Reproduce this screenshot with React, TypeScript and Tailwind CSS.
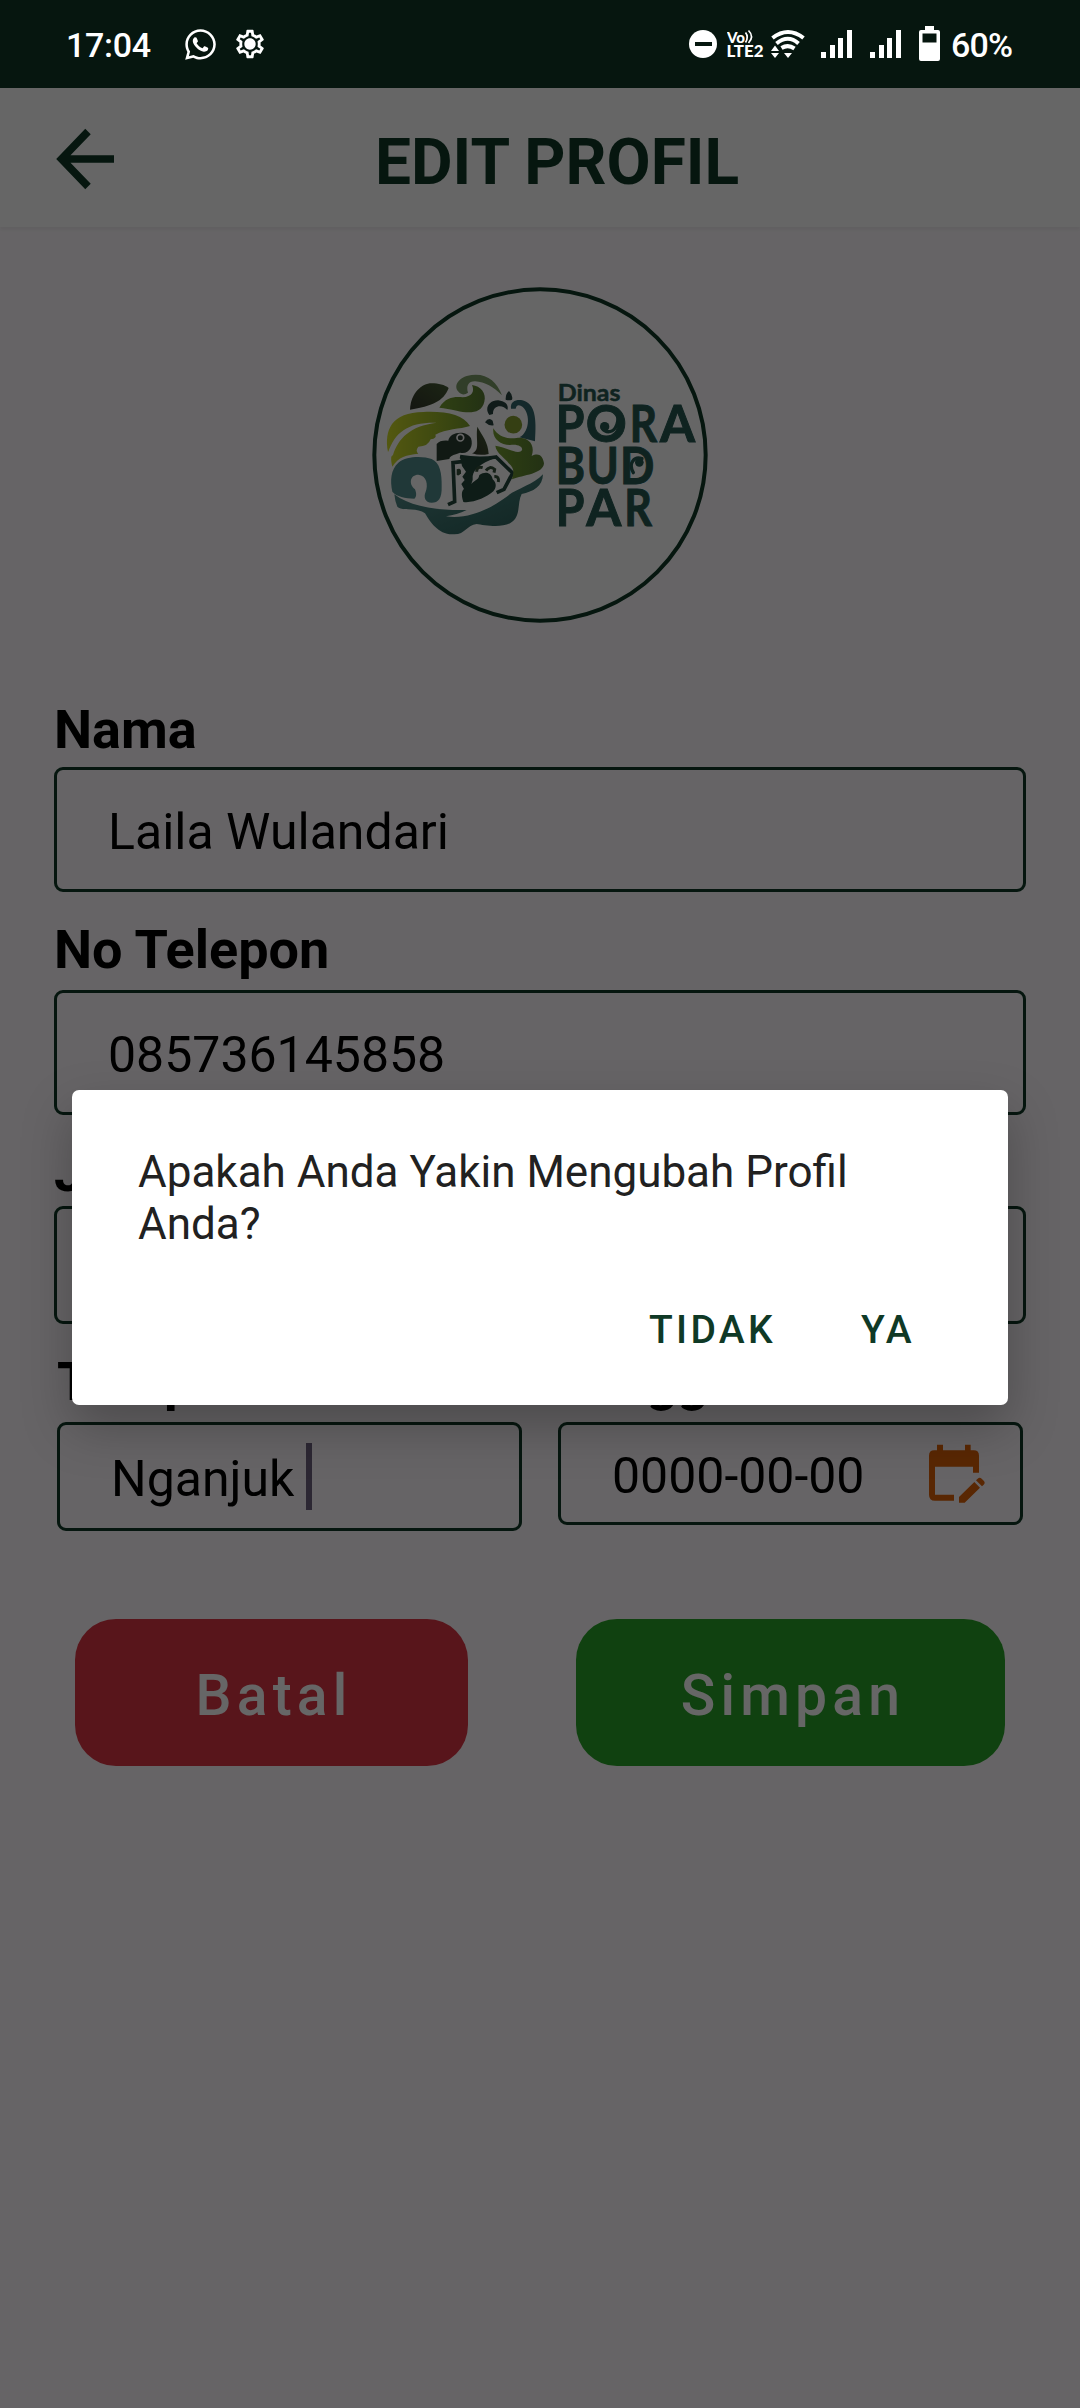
import React from "react";
import { FaWhatsapp } from "react-icons/fa";
import { MdOutlineSettings } from "react-icons/md";

function SignalIcon({ className }: { className: string }) {
  return (
    <svg className={className} width="31" height="28" viewBox="0 0 31 28" fill="white">
      <path d="M0 22h5v6H0zM9 15h5v13H9zM17 8h5v20h-5zM26 0h5v28h-5z" />
    </svg>
  );
}

function EditCalendarIcon() {
  return (
    <svg width="57" height="61" viewBox="42 40 171 183" fill="#de6108">
      <path
        fillRule="evenodd"
        d="M66 45h18v17h66V45h17v17h9q16 0 16 16v51h-18v-18H60v84h57v18H60q-18 0-18-18V78q0-16 16-16h8z"
      />
      <path d="M132 219v-17l46-45 17 17-46 45zM183 152l5-5q6-6 12 0l6 6q6 6 0 12l-5 5z" />
    </svg>
  );
}

function StatusBar() {
  return (
    <div className="relative z-20 flex h-[88px] items-start text-white">
      <span className="ml-[66px] mt-[25px] w-[90px] text-[34px] font-medium leading-10 tracking-[-0.3px]">17:04</span>
      <FaWhatsapp className="ml-[27px] mt-[27px] size-[35px]" />
      <div className="relative ml-[15px] mt-[27px] size-[34px]">
        <MdOutlineSettings className="size-[34px]" />
        <div className="absolute left-[12px] top-[12px] size-[10px] rounded-full bg-white" />
      </div>
      <div className="ml-[422px] mt-[30px] flex size-[28px] items-center justify-center rounded-full bg-white">
        <div className="h-[4px] w-[17px] bg-[#06170f]" />
      </div>
      <svg className="ml-[10px] mt-[27px]" width="38" height="34" viewBox="0 0 38 34">
        <text x="0" y="15.500" fontSize="15.500" fontWeight="900" fontFamily="Lato" textLength="18" lengthAdjust="spacingAndGlyphs" fill="white">Vo</text>
        <path d="M18.500 5.500q3.500 4.500 0 10M21.500 3.500q6 6 0 12.500" fill="none" stroke="white" strokeWidth="1.700" />
        <text x="-0.500" y="30" fontSize="16.500" fontWeight="900" fontFamily="Lato" textLength="37" lengthAdjust="spacingAndGlyphs" fill="white">LTE2</text>
      </svg>
      <svg className="ml-[6px] mt-[28px]" width="34" height="32" viewBox="0 0 34 32">
        <g fill="none" stroke="white" strokeWidth="4">
          <path d="M1.500 10Q17-2 32.500 10" />
          <path d="M5.500 15.500Q17 6 27.500 15.500" />
          <path d="M10.500 20Q17 16 23.500 20.500" />
        </g>
        <path d="M13 25h8l-4 5zM0 23l4-5.500 4 5.500zM0 25h8l-4 5z" fill="white" />
      </svg>
      <SignalIcon className="ml-[16px] mt-[30px]" />
      <SignalIcon className="ml-[18px] mt-[30px]" />
      <svg className="ml-[18px] mt-[26px]" width="21" height="36" viewBox="0 0 21 36">
        <path fill="white" fillRule="evenodd" d="M6 0h9v4h4q2 0 2 2v27q0 2-2 2H2q-2 0-2-2V6q0-2 2-2h4zM3.500 7.500v9h14v-9z" />
      </svg>
      <span className="ml-[11px] mt-[25px] text-[34px] font-medium leading-10 tracking-[-0.8px]">60%</span>
    </div>
  );
}

function Header() {
  return (
    <header className="flex h-[139px] items-center bg-white text-[#0f3926] shadow-[0_3px_3px_rgba(0,0,0,0.05)]">
      <svg className="ml-[54px] mt-[3px]" width="62" height="62" viewBox="0 0 62 62" fill="none" stroke="currentColor" strokeWidth="7.600">
        <path d="M60 31H8M34 3.500L7.500 31 34 58.500" />
      </svg>
      <h1 className="ml-[259px] mt-[10px] text-[64px] font-bold leading-[76px]">EDIT PROFIL</h1>
    </header>
  );
}

function Logo() {
  return (
    <svg className="mx-auto mt-[53px] block" width="360" height="350" viewBox="0 0 1080 1050">
      <defs>
        <linearGradient id="leaf" x1="0" x2="1">
          <stop offset="0" stopColor="#d0dc28" />
          <stop offset="1" stopColor="#7a9e2c" />
        </linearGradient>
        <linearGradient id="wave" x1="0" x2="1" y1="0" y2="1">
          <stop offset="0" stopColor="#58918f" />
          <stop offset="0.6" stopColor="#3a716c" />
          <stop offset="1" stopColor="#2b5c57" />
        </linearGradient>
        <linearGradient id="dusk" x1="0" x2="1" y1="1" y2="0">
          <stop offset="0" stopColor="#33362a" />
          <stop offset="1" stopColor="#455c34" />
        </linearGradient>
        <linearGradient id="moss" x1="0" x2="1">
          <stop offset="0" stopColor="#76a030" />
          <stop offset="1" stopColor="#587c32" />
        </linearGradient>
      </defs>
      <circle cx="540" cy="525" r="497" fill="white" stroke="#0f3926" strokeWidth="12" />
      <path fill="url(#dusk)" d="M150 389C152 340 185 310 215 310 235 310 255 315 266 324 250 365 215 378 150 389Z" />
      <path fill="#7c9c68" d="M307 343C278 330 285 300 320 288 375 275 408 300 426 346 400 320 375 306 345 304 325 304 318 318 324 338Q315 345 307 343Z" />
      <path fill="url(#moss)" d="M238 383C258 350 285 350 308 352 335 350 345 335 336 315 362 318 380 340 373 365 365 402 325 400 290 392 270 387 255 385 238 383Z" />
      <path fill="url(#leaf)" d="M84 516C72 450 95 397 190 396 260 393 310 405 330 438 300 448 258 446 226 464Q232 474 212 478 204 500 175 500 165 512 175 521C140 525 115 530 97 560 92 540 92 530 100 505Z" />
      <path fill="white" d="M84 518C105 455 145 426 230 428 150 438 115 475 99 525L88 535Z" />
      <path fill="#528c8c" d="M97 635C90 600 92 570 115 548 140 527 190 528 215 537 240 548 246 580 245 620 246 655 235 668 215 668 195 668 190 650 197 635 205 615 200 586 175 584 150 584 145 612 165 628 170 640 170 652 163 656 135 655 110 650 97 635Z" />
      <path fill="url(#wave)" d="M103 643C150 680 230 692 320 690 300 700 280 705 258 709 330 720 400 680 440 650 470 625 520 615 549 583 548 620 520 635 485 642 470 670 485 710 450 730 420 745 370 735 350 732 320 735 315 765 280 763 235 765 210 725 195 700 170 680 125 695 112 680Q105 665 103 643Z" />
      <path fill="#2c4034" d="M230 492Q240 480 265 482C268 455 320 448 333 475 342 500 325 525 300 518L290 522Q268 528 268 537L230 543Z" />
      <circle cx="301" cy="473" r="10" fill="#2c4034" stroke="white" strokeWidth="5" />
      <path fill="url(#dusk)" d="M352 440C368 470 384 485 386 522Q360 528 336 520C362 510 346 480 352 440Z" />
      <g fill="none" stroke="#23483c">
        <path d="M264 674L284 665 279 548 306 545" strokeWidth="11" />
        <path d="M300 530Q360 540 408 531L458 579 432 628 410 638" strokeWidth="11" />
      </g>
      <path fill="#24463a" d="M300 530L400 536C365 550 342 565 338 588Q340 602 334 612C346 598 355 602 358 585 378 572 395 580 398 598 412 610 408 625 400 634 380 652 340 670 310 666 303 645 305 632 312 627L304 612 314 600 307 590 318 575 306 558Z" />
      <g fill="none" stroke="#35503a" strokeWidth="9">
        <path d="M350 575Q350 558 368 563M378 572Q388 556 404 568L402 578M403 590Q418 588 415 606" />
      </g>
      <path fill="#35503a" d="M290 568Q305 562 303 580 296 590 290 584Z" />
      <path fill="#284540" d="M388 405C372 385 388 360 415 361 437 364 447 375 442 390 428 372 398 375 399 402ZM437 359Q436 342 447 333 460 346 456 359 447 363 437 359ZM375 427Q386 410 398 422L401 436Q386 438 375 427Z" />
      <circle cx="460" cy="434" r="26.500" fill="#869e30" />
      <path fill="#34676c" d="M453 386C450 363 470 358 487 361 526 370 530 415 525 484L478 472C512 455 512 392 482 377Q470 372 467 386Z" />
      <path fill="url(#moss)" d="M400 445C396 475 420 495 450 495 478 490 494 505 483 514 465 522 435 500 406 497 408 520 438 535 446 550 466 568 460 580 456 598 490 585 550 582 552 550 548 525 535 518 515 528 528 490 500 470 470 474 440 478 415 470 400 445Z" />
      <g fill="#275851" stroke="#275851" strokeWidth="3" fontFamily="Lato, sans-serif" fontWeight="700">
        <text x="593" y="362" fontSize="69" strokeWidth="1.500" textLength="188" lengthAdjust="spacingAndGlyphs">Dinas</text>
        <text x="587" y="487" fontSize="153" textLength="86" lengthAdjust="spacingAndGlyphs">P</text>
        <text x="677" y="487" fontSize="153" textLength="123" lengthAdjust="spacingAndGlyphs">O</text>
        <text x="809" y="487" fontSize="153" textLength="82" lengthAdjust="spacingAndGlyphs">R</text>
        <text x="900" y="487" fontSize="153" textLength="105" lengthAdjust="spacingAndGlyphs">A</text>
        <text x="587" y="611" fontSize="153" textLength="88" lengthAdjust="spacingAndGlyphs">B</text>
        <text x="680" y="611" fontSize="153" textLength="96" lengthAdjust="spacingAndGlyphs">U</text>
        <text x="780" y="611" fontSize="153" textLength="103" lengthAdjust="spacingAndGlyphs">D</text>
        <text x="587" y="737" fontSize="153" textLength="86" lengthAdjust="spacingAndGlyphs">P</text>
        <text x="679" y="737" fontSize="153" textLength="105" lengthAdjust="spacingAndGlyphs">A</text>
        <text x="793" y="737" fontSize="153" textLength="83" lengthAdjust="spacingAndGlyphs">R</text>
      </g>
      <g fill="none" stroke="#275851" strokeWidth="10" strokeLinecap="round">
        <path d="M773 400C778 440 760 458 740 455 724 450 724 436 732 432" />
        <path d="M820 578C803 548 824 528 846 536" />
      </g>
      <circle cx="734" cy="440" r="14" fill="#275851" />
      <circle cx="838" cy="547" r="13" fill="#275851" />
    </svg>
  );
}

function Label({ className, children }: { className: string; children: React.ReactNode }) {
  return <div className={`text-[54px] font-bold leading-[64px] text-black ${className}`}>{children}</div>;
}

const fieldBase = "flex items-center rounded-[9px] border-[3px] border-[#0f3926] text-[50px] text-black";

function ProfileForm() {
  return (
    <main>
      <Logo />
      <div className="ml-[54px] mr-[54px]">
        <Label className="mt-[68px]">Nama</Label>
        <div className={`${fieldBase} mt-[5px] h-[125px] pl-[51px] pt-[5px]`}>Laila Wulandari</div>
        <Label className="mt-[26px]">No Telepon</Label>
        <div className={`${fieldBase} mt-[8px] h-[125px] pl-[51px] pt-[5px]`}>085736145858</div>
        <Label className="mt-[26px]">Jenis Kelamin</Label>
        <div className={`${fieldBase} mt-[1px] h-[118px]`} />
      </div>
      <div className="ml-[57px] mr-[57px] mt-[26px] flex items-start gap-[36px]">
        <div className="w-[465px]">
          <Label className="whitespace-nowrap">Tempat Lahir</Label>
          <div className={`${fieldBase} mt-[8px] h-[109px] pl-[51px]`}>
            <span className="pt-[6px]">Nganjuk</span>
            <span className="ml-[12px] h-[67px] w-[6px] bg-[#6e6280]" />
          </div>
        </div>
        <div className="w-[465px]">
          <Label className="whitespace-nowrap">Tanggal Lahir</Label>
          <div className={`${fieldBase} mt-[8px] h-[103px] pl-[51px]`}>
            <span className="w-[317px] pt-[5px]">0000-00-00</span>
            <EditCalendarIcon />
          </div>
        </div>
      </div>
      <div className="ml-[75px] mr-[75px] mt-[88px] flex justify-between text-[57px] font-medium text-white">
        <button className="h-[147px] w-[393px] rounded-[41px] bg-[#dc3545] pl-[5px] pt-[7px] tracking-[5.200px]">Batal</button>
        <button className="h-[147px] w-[429px] rounded-[41px] bg-[#2aa328] pl-[5px] pt-[7px] tracking-[5.200px]">Simpan</button>
      </div>
    </main>
  );
}

function ConfirmDialog() {
  return (
    <div className="absolute inset-0 z-10 flex items-start justify-center bg-black/60">
      <div role="dialog" className="mt-[1090px] h-[315px] w-[936px] rounded-[7px] bg-white pl-[66px] pr-[66px] pt-[56px] shadow-[0_22px_50px_rgba(0,0,0,0.25)]">
        <p className="text-[44px] leading-[52px] text-[#212121]">
          Apakah Anda Yakin Mengubah Profil
          <br />
          Anda?
        </p>
        <div className="mt-[54px] flex justify-end gap-[85px] pr-[27px] text-[39px] font-medium leading-[52px] tracking-[3.300px] text-[#0f3926]">
          <button>TIDAK</button>
          <button>YA</button>
        </div>
      </div>
    </div>
  );
}

export default function App() {
  return (
    <div className="relative h-[2408px] w-[1080px] overflow-hidden bg-[#fffbff] font-['Roboto',sans-serif]">
      <div className="bg-[#0f3926]">
        <StatusBar />
      </div>
      <Header />
      <ProfileForm />
      <ConfirmDialog />
    </div>
  );
}
